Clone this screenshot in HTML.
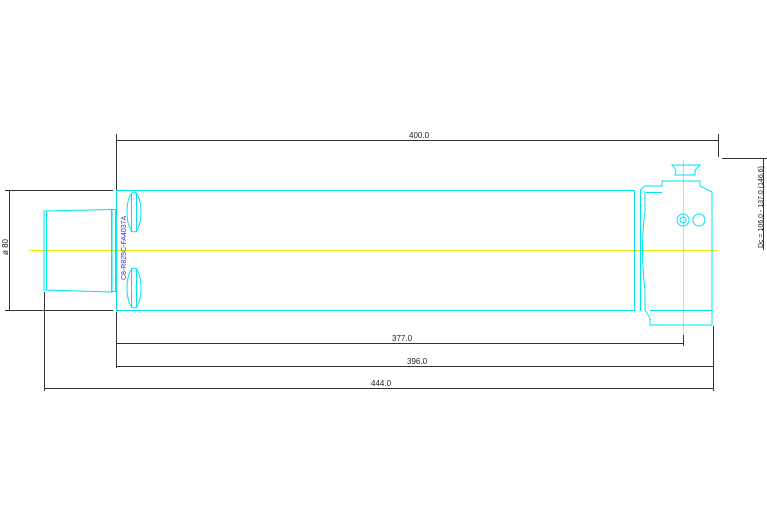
<!DOCTYPE html>
<html><head><style>html,body{margin:0;padding:0;background:#fff;width:767px;height:523px;overflow:hidden}</style></head>
<body>
<svg width="767" height="523" viewBox="0 0 767 523" xmlns="http://www.w3.org/2000/svg" font-family="Liberation Sans, sans-serif">
<g stroke="#333" stroke-width="1" fill="none" shape-rendering="crispEdges">
<line x1="116.5" y1="134" x2="116.5" y2="190"/>
<line x1="116" y1="140.5" x2="718" y2="140.5"/>
<line x1="718.5" y1="134" x2="718.5" y2="157"/>
<line x1="722" y1="158.5" x2="767" y2="158.5"/>
<line x1="763.5" y1="159" x2="763.5" y2="250"/>
<line x1="5" y1="190.5" x2="113" y2="190.5"/>
<line x1="5" y1="310.5" x2="113" y2="310.5"/>
<line x1="9.5" y1="190" x2="9.5" y2="310"/>
<line x1="44.5" y1="292" x2="44.5" y2="391"/>
<line x1="116.5" y1="312" x2="116.5" y2="368"/>
<line x1="713.5" y1="326" x2="713.5" y2="391"/>
<line x1="683.5" y1="326" x2="683.5" y2="346"/>
<line x1="116" y1="343.5" x2="683" y2="343.5"/>
<line x1="116" y1="366.5" x2="713" y2="366.5"/>
<line x1="44" y1="388.5" x2="713" y2="388.5"/>
</g>
<g font-size="8" fill="#222">
<text x="409" y="138">400.0</text>
<text x="392" y="341">377.0</text>
<text x="407" y="364">396.0</text>
<text x="371" y="386">444.0</text>
<text transform="translate(8,255) rotate(-90)">ø 80</text>
<text transform="translate(763,248) rotate(-90)" font-size="7">Dc = 106.0 - 137.0 (146.6)</text>
</g>
<line x1="29" y1="250.5" x2="718" y2="250.5" stroke="#ee0" stroke-width="1"/>
<line x1="683.5" y1="160" x2="683.5" y2="335" stroke="#ee0" stroke-width="1"/>
<g stroke="#00e5ee" stroke-width="1" fill="none">
<rect x="116.5" y="190.5" width="518" height="120"/>
<line x1="640.5" y1="190" x2="640.5" y2="311"/>
<polygon points="44,211 112,209.5 112,292 44,290"/>
<line x1="46.5" y1="211" x2="46.5" y2="290"/>
<rect x="111.5" y="209.5" width="4" height="82"/>
<ellipse cx="134" cy="212" rx="7" ry="20"/>
<line x1="131.5" y1="193" x2="131.5" y2="232"/><line x1="136.5" y1="193" x2="136.5" y2="232"/>
<ellipse cx="134" cy="288" rx="7" ry="20"/>
<line x1="131.5" y1="268" x2="131.5" y2="308"/><line x1="136.5" y1="268" x2="136.5" y2="308"/>
<path d="M640 190 L645 186 L662 186 L662 181 L700 181 L700 186 L712 192 L712 325 L650 325 L650 318 L645 310 L645 290 Q640 250 645 210 L645 192"/>
<line x1="650" y1="310.5" x2="712" y2="310.5"/>
<line x1="646" y1="192.5" x2="662" y2="192.5"/>
<path d="M675 175 L695 175 L695 170 L700 165 L672 165 L676 170 Z"/>
<circle cx="683" cy="220" r="6"/><circle cx="683" cy="220" r="3"/>
<circle cx="699" cy="220" r="6"/>
</g>
<text transform="translate(126,280) rotate(-90)" font-size="7" fill="#3333cc">C8-R825C-FA4037A</text>
</svg>
</body></html>
